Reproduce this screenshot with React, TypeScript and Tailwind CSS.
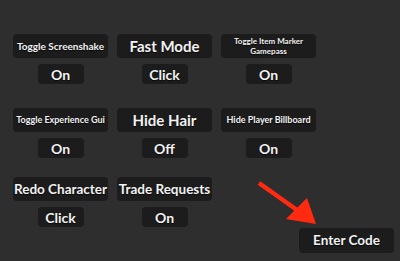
import React from 'react';

type Setting = {
  label: string;
  value: string;
  size: string; // label text class
};

const ROWS: Setting[][] = [
  [
    { label: 'Toggle Screenshake', value: 'On', size: 'text-[10px]' },
    { label: 'Fast Mode', value: 'Click', size: 'text-[15px]' },
    { label: 'Toggle Item Marker\nGamepass', value: 'On', size: 'text-[8px] leading-[10px]' },
  ],
  [
    { label: 'Toggle Experience Gui', value: 'On', size: 'text-[9px]' },
    { label: 'Hide Hair', value: 'Off', size: 'text-[15px]' },
    { label: 'Hide Player Billboard', value: 'On', size: 'text-[9px]' },
  ],
  [
    { label: 'Redo Character', value: 'Click', size: 'text-[13.5px]' },
    { label: 'Trade Requests', value: 'On', size: 'text-[13.5px]' },
  ],
];

const shadow = '[text-shadow:0_1px_1px_rgba(0,0,0,0.7)]';

function SettingCell({ s }: { s: Setting }) {
  return (
    <div className="flex flex-col items-center">
      <div
        className={`w-[95px] h-[24px] rounded-[4px] bg-[#1c1c1c] flex items-center justify-center text-center whitespace-pre-line font-bold text-[#f2f2f2] ${s.size} ${shadow}`}
      >
        {s.label}
      </div>
      <div
        className={`mt-[6px] w-[46px] h-[20px] rounded-[4px] bg-[#1c1c1c] flex items-center justify-center font-bold text-[14px] text-[#f2f2f2] ${shadow}`}
      >
        {s.value}
      </div>
    </div>
  );
}

export default function App() {
  return (
    <div
      className="relative w-[400px] h-[261px] overflow-hidden bg-[#2e2e2e]"
      style={{ fontFamily: 'Lato, "Open Sans", sans-serif' }}
    >
      <div className="flex flex-col pl-[13px] pt-[34px]">
        {ROWS.map((row, i) => (
          <div
            key={i}
            className={`flex gap-x-[9px] ${i === 1 ? 'mt-[24px]' : i === 2 ? 'mt-[19px]' : ''}`}
          >
            {row.map(s => (
              <SettingCell key={s.label} s={s} />
            ))}
          </div>
        ))}
      </div>

      {/* Enter Code button */}
      <div
        className={`absolute left-[299px] top-[228px] w-[95px] h-[25px] rounded-[4px] bg-[#1c1c1c] flex items-center justify-center font-bold text-[13.5px] text-[#f2f2f2] ${shadow}`}
      >
        Enter Code
      </div>

      {/* red annotation arrow */}
      <svg className="absolute left-0 top-0" width="400" height="261" viewBox="0 0 400 261">
        <line x1="259" y1="183" x2="297" y2="210" stroke="#ff2a10" strokeWidth="4.5" />
        <polygon points="286,219 316,224 307,198" fill="#ff2a10" />
      </svg>
    </div>
  );
}
